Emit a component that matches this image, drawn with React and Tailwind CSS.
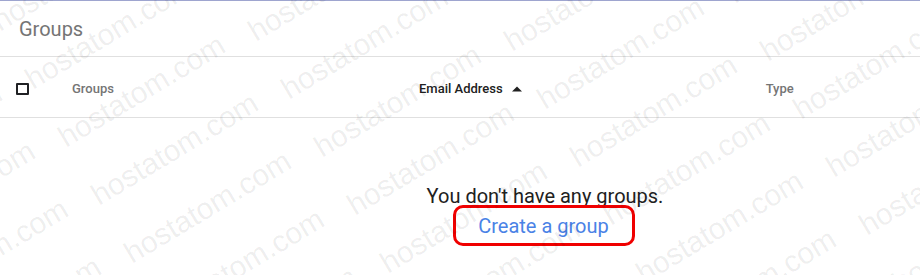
import { useMemo } from "react";

// tiled watermark lattice read off the screenshot
const ORIGIN = [33, 90];
const STEP_A = [33, 58];
const STEP_B = [223, -48];

function watermarkPoints() {
  const out = [];
  for (let k = -8; k <= 10; k++) {
    for (let m = -3; m <= 7; m++) {
      const x = ORIGIN[0] + k * STEP_A[0] + m * STEP_B[0];
      const y = ORIGIN[1] + k * STEP_A[1] + m * STEP_B[1];
      if (x < -200 || x > 930 || y < 0 || y > 400) continue;
      out.push({ key: `${k}-${m}`, x, y });
    }
  }
  return out;
}

function Watermark() {
  const points = useMemo(() => watermarkPoints(), []);
  return (
    <div className="pointer-events-none absolute inset-0" aria-hidden="true">
      {points.map((p) => (
        <span
          key={p.key}
          className="absolute origin-[0_25px] -rotate-[31deg] whitespace-nowrap font-['Liberation_Sans',Arial,sans-serif] text-[30px] leading-none text-black/[0.075]"
          style={{ left: p.x, top: p.y - 25 }}
        >
          hostatom.com
        </span>
      ))}
    </div>
  );
}

export default function App() {
  return (
    <div className="relative h-[275px] w-[920px] overflow-hidden bg-white font-['Roboto',sans-serif]">
      <div className="border-t border-[#9ea5cf]">
        <div className="flex h-[56px] items-center border-b border-[#e0e0e0] pl-[19px]">
          <h1 className="text-[20px] font-normal text-[#757575]">Groups</h1>
        </div>

        <div className="flex h-[61px] items-center border-b border-[#e0e0e0] pt-[3px] text-[13px] font-medium">
          <div className="ml-[16px] h-[12px] w-[13px] rounded-[1px] border-2 border-[#202124]" />
          <span className="ml-[43px] w-[347px] text-[#757575]">Groups</span>
          <span className="flex items-center text-[#212121]">
            Email Address
            <svg className="ml-[9px]" width="10" height="6" viewBox="0 0 10 6">
              <path d="M0 5.5 L5 0.5 L10 5.5 Z" fill="#212121" />
            </svg>
          </span>
          <span className="ml-[244px] text-[#757575]">Type</span>
        </div>

        <div className="flex flex-col items-center pl-[170px] pt-[70px]">
          <p className="text-[20px] leading-[17px] text-[#212121]">You don't have any groups.</p>
          <a
            href="#"
            className="-ml-[3px] flex h-[41px] w-[182px] items-center justify-center rounded-[10px] border-[3px] border-[#f00000] text-[20px] text-[#4a82e6]"
          >
            Create a group
          </a>
        </div>
      </div>
      <Watermark />
    </div>
  );
}
